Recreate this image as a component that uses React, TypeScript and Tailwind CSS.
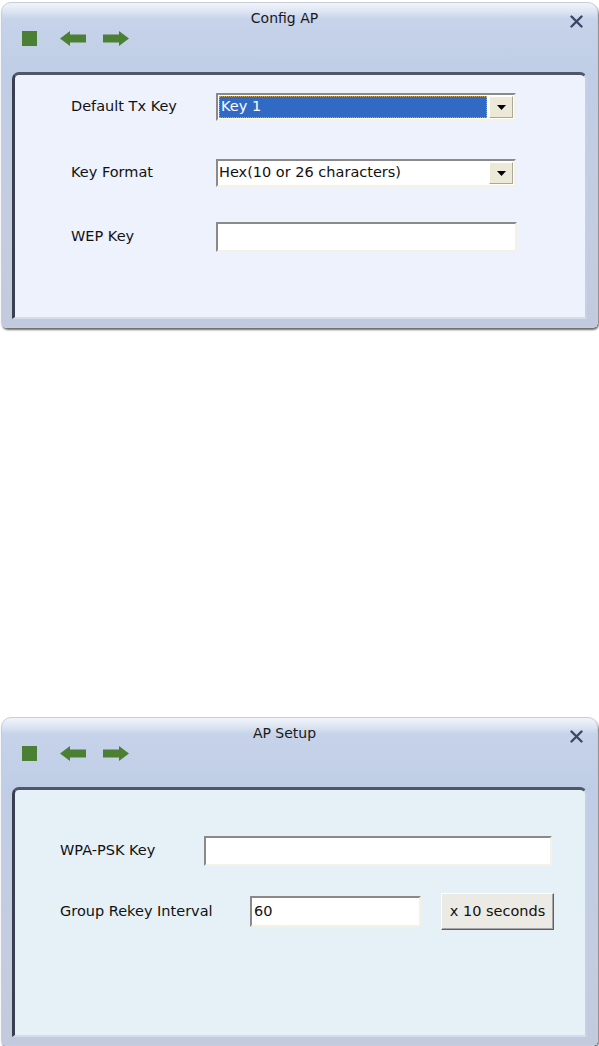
import React from "react";

const font = { fontFamily: '"DejaVu Sans", Tahoma, sans-serif' };

function Icons() {
  return (
    <div className="flex items-center pl-[20px]">
      <div className="w-[15px] h-[15px] bg-[#4b8034]" />
      <svg className="ml-[23px]" width="26" height="15" viewBox="0 0 26 15">
        <path d="M0 7.5 L10 0 L10 3.5 L26 3.5 L26 11.5 L10 11.5 L10 15 Z" fill="#4b8034" />
      </svg>
      <svg className="ml-[17px]" width="26" height="15" viewBox="0 0 26 15">
        <path d="M26 7.5 L16 0 L16 3.5 L0 3.5 L0 11.5 L16 11.5 L16 15 Z" fill="#4b8034" />
      </svg>
    </div>
  );
}

function Win({
  title,
  panelBg,
  children,
  height,
}: {
  title: string;
  panelBg: string;
  children: React.ReactNode;
  height: string;
}) {
  return (
    <div className={`relative ${height} w-[597px] ml-[1px]`}>
      <div className="h-full rounded-t-[10px] rounded-b-[6px] border border-[#c8cdd8] bg-[linear-gradient(to_bottom,#f1f4fa_0px,#dfe6f3_8px,#c6d3ea_16px,#bfcde6_70px,#c9d2e4_100%)] flex flex-col shadow-[1px_2px_2px_#6b6b6b]">
        <div className="h-[24px] relative flex items-start justify-center text-[14px] text-[#1a1a1a] pt-[6px]">
          <span className="pr-[30px] leading-[18px]">{title}</span>
          <svg className="absolute right-[14px] top-[12px]" width="13" height="13" viewBox="0 0 13 13">
            <path d="M1.5 1.5 L11.5 11.5 M11.5 1.5 L1.5 11.5" stroke="#3c4766" strokeWidth="2.4" strokeLinecap="round" />
          </svg>
        </div>
        <div className="h-[28px] flex items-center pb-[5px]">
          <Icons />
        </div>
        <div className="flex-1 px-[10px] pb-[8px] pt-[17px] bg-gradient-to-b from-transparent to-[#c2cade]">
          <div
            className={`h-full rounded-t-[7px] border-t-[3px] border-l-[3px] border-t-[#4e5668] border-l-[#3a4050] border-r-[2px] border-r-[#c5d0e6] border-b-[2px] border-b-[#d4dcec] ${panelBg}`}
          >
            {children}
          </div>
        </div>
      </div>
    </div>
  );
}

function Arrow() {
  return (
    <div className="w-[24px] h-[22px] bg-[#ece9d8] border border-t-white border-l-white border-r-[#aca899] border-b-[#aca899] flex items-center justify-center">
      <svg width="9" height="5" viewBox="0 0 9 5">
        <path d="M0 0 L9 0 L4.5 5 Z" fill="#000" />
      </svg>
    </div>
  );
}

const inset =
  "border-2 border-t-[#8a8a8a] border-l-[#8a8a8a] border-r-[#f4f1e6] border-b-[#f4f1e6] bg-white";

export default function App() {
  return (
    <div className="w-[599px] h-[1046px] bg-white text-[14.5px] text-[#111] pt-[2px]" style={font}>
      <Win title="Config AP" panelBg="bg-[#eef2fd]" height="h-[326px]">
        <div className="flex flex-col pl-[56px] pt-[18px] gap-[38px]">
          <div className="flex items-center">
            <div className="w-[145px]">Default Tx Key</div>
            <div className={`w-[300px] h-[28px] flex items-center pl-[1px] pr-[1px] ${inset}`}>
              <div className="flex-1 h-[22px] bg-[#316ac5] text-white flex items-center pl-[2px] outline-dotted outline-1 outline-[#c9a35a] -outline-offset-1 mr-[2px]">
                Key 1
              </div>
              <Arrow />
            </div>
          </div>
          <div className="flex items-center">
            <div className="w-[145px]">Key Format</div>
            <div className={`w-[300px] h-[28px] flex items-center pr-[1px] ${inset}`}>
              <div className="flex-1 pl-[1px]">Hex(10 or 26 characters)</div>
              <Arrow />
            </div>
          </div>
          <div className="flex items-center -mt-[3px]">
            <div className="w-[145px]">WEP Key</div>
            <div className={`w-[301px] h-[30px] ${inset}`} />
          </div>
        </div>
      </Win>
      <div className="h-[389px]" />
      <Win title="AP Setup" panelBg="bg-[#e6f0f7]" height="h-[329px]">
        <div className="flex flex-col pl-[45px] pt-[46px] gap-[27px]">
          <div className="flex items-center">
            <div className="w-[144px]">WPA-PSK Key</div>
            <div className={`w-[348px] h-[30px] ${inset}`} />
          </div>
          <div className="flex items-center">
            <div className="w-[190px]">Group Rekey Interval</div>
            <div className={`w-[171px] h-[31px] flex items-center pl-[2px] ${inset}`}>60</div>
            <div className="ml-[20px] w-[113px] h-[37px] bg-[#eceae4] border border-t-white border-l-white border-r-[#5f5f5f] border-b-[#5f5f5f] shadow-[inset_-1px_-1px_0_#a6a6a6] flex items-center justify-center">
              x 10 seconds
            </div>
          </div>
        </div>
      </Win>
    </div>
  );
}
